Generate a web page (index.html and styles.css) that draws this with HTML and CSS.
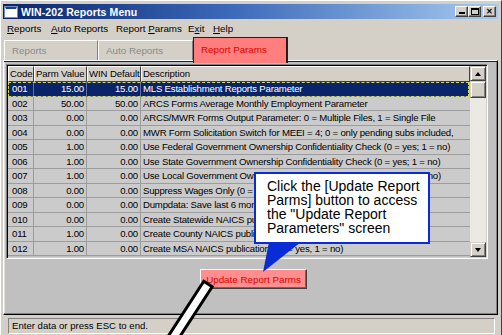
FILE: index.html
```html
<!DOCTYPE html>
<html>
<head>
<meta charset="utf-8">
<link rel="stylesheet" href="styles.css">
</head>
<body>
<div class="window">
  <div class="titlebar">
    <span class="ticon"></span>
    <span class="ttext">WIN-202 Reports Menu</span>
    <div class="tbtns">
      <span class="tb tb-min"><i></i></span>
      <span class="tb tb-max"><i></i></span>
      <span class="tb tb-close">✕</span>
    </div>
  </div>
  <div class="menubar">
    <span class="m m1"><u>R</u>eports</span>
    <span class="m m2"><u>A</u>uto Reports</span>
    <span class="m m3">Report <u>P</u>arams</span>
    <span class="m m4">E<u>x</u>it</span>
    <span class="m m5"><u>H</u>elp</span>
  </div>
  <div class="tabs">
    <div class="tab t1">Reports</div>
    <div class="tab t2">Auto Reports</div>
    <div class="tab active">Report Params</div>
  </div>
  <div class="panel">
    <div class="gridbox">
      <div class="grid">
        <div class="row head"><span>Code</span><span>Parm Value</span><span>WIN Default</span><span class="d">Description</span></div>
        <div class="row sel"><span class="c">001</span><span class="n">15.00</span><span class="n">15.00</span><span class="d">MLS Establishment Reports Parameter</span></div>
        <div class="row"><span class="c">002</span><span class="n">50.00</span><span class="n">50.00</span><span class="d">ARCS Forms Average Monthly Employment Parameter</span></div>
        <div class="row"><span class="c">003</span><span class="n">0.00</span><span class="n">0.00</span><span class="d">ARCS/MWR Forms Output Parameter: 0 = Multiple Files, 1 = Single File</span></div>
        <div class="row"><span class="c">004</span><span class="n">0.00</span><span class="n">0.00</span><span class="d">MWR Form Solicitation Switch for MEEI = 4; 0 = only pending subs included,</span></div>
        <div class="row"><span class="c">005</span><span class="n">1.00</span><span class="n">0.00</span><span class="d">Use Federal Government Ownership Confidentiality Check (0 = yes; 1 = no)</span></div>
        <div class="row"><span class="c">006</span><span class="n">1.00</span><span class="n">0.00</span><span class="d">Use State Government Ownership Confidentiality Check (0 = yes; 1 = no)</span></div>
        <div class="row"><span class="c">007</span><span class="n">1.00</span><span class="n">0.00</span><span class="d">Use Local Government Ownership Confidentiality Check (0 = yes; 1 = no)</span></div>
        <div class="row"><span class="c">008</span><span class="n">0.00</span><span class="n">0.00</span><span class="d">Suppress Wages Only (0 = yes; 1 = no)</span></div>
        <div class="row"><span class="c">009</span><span class="n">0.00</span><span class="n">0.00</span><span class="d">Dumpdata: Save last 6 months of data (0 = no; 1 = yes; max = 4)</span></div>
        <div class="row"><span class="c">010</span><span class="n">0.00</span><span class="n">0.00</span><span class="d">Create Statewide NAICS publications (0 = yes, 1 = no)</span></div>
        <div class="row"><span class="c">011</span><span class="n">1.00</span><span class="n">0.00</span><span class="d">Create County NAICS publications (0 = yes, 1 = no)</span></div>
        <div class="row"><span class="c">012</span><span class="n">1.00</span><span class="n">0.00</span><span class="d">Create MSA NAICS publications (0 = yes, 1 = no)</span></div>
      </div>
      <div class="vscroll">
        <div class="sbtn up"><i></i></div>
        <div class="thumb"></div>
        <div class="track"></div>
        <div class="sbtn down"><i></i></div>
      </div>
    </div>
    <div class="btnrow"><button class="upd">Update Report Parms</button></div>
  </div>
  <div class="status"><div class="statusbox">Enter data or press ESC to end.</div></div>

  <div class="callout">Click the [Update Report Parms] button to access the "Update Report Parameters" screen</div>
  <svg class="overlay" width="502" height="335" viewBox="0 0 502 335">
    <polygon points="268,241 300,241 262,271" fill="#0a2cd6"/>
    <polygon points="202.8,280.3 211.2,285.7 176.2,339.7 167.8,334.3" fill="#ffffff" stroke="#000" stroke-width="3" stroke-linejoin="miter"/>
  </svg>
</div>
</body>
</html>
```
FILE: styles.css
```css
* { box-sizing: border-box; }
html, body { margin: 0; padding: 0; }
body {
  width: 502px; height: 335px; overflow: hidden;
  font-family: "Liberation Sans", Arial, sans-serif;
  font-size: 9.5px;
  background: #d4d0c8;
  color: #000;
}
.window {
  position: relative;
  height: 335px;
  padding: 3px 3px 0 3px;
  background: #d4d0c8;
  border-left: 1px solid #ffffff;
  border-top: 1px solid #ffffff;
  border-right: 1px solid #404040;
}
.titlebar {
  height: 15px;
  margin-left: -1px;
  display: flex;
  align-items: center;
  background: linear-gradient(to right, #0a246a 0%, #3a68b8 45%, #a6caf0 100%);
  padding-left: 2px;
}
.ticon {
  width: 12px; height: 10px;
  background: #fff;
  border: 1px solid #fff;
  border-top: 2px solid #1c3c8c;
  box-shadow: 0 0 0 1px #6d8fc8;
}
.ttext {
  color: #fff; font-weight: bold; font-size: 10.5px;
  margin-left: 4px; letter-spacing: 0.1px;
}
.tbtns { margin-left: auto; display: flex; padding-right: 2px; }
.tb {
  width: 13px; height: 11px;
  background: #d4d0c8;
  border: 1px solid; border-color: #fff #404040 #404040 #fff;
  box-shadow: inset -1px -1px #808080;
  position: relative;
  display: flex; align-items: center; justify-content: center;
  font-size: 9px; font-weight: bold; line-height: 1;
}
.tb-max { margin-right: 2px; }
.tb-min i { position: absolute; left: 3px; bottom: 2px; width: 6px; height: 2px; background: #000; }
.tb-max i { width: 8px; height: 7px; border: 1px solid #000; border-top-width: 2px; }
.tb-close { font-size: 8px; }

.menubar {
  height: 18px;
  display: flex; align-items: center;
  padding-left: 3px;
  font-size: 9.8px;
}
.m { display: block; }
.m1 { width: 44px; }
.m2 { width: 65px; }
.m3 { width: 72px; }
.m4 { width: 25px; }

.tabs {
  height: 23px;
  display: flex; align-items: flex-end;
  padding-left: 0;
  position: relative; z-index: 2;
}
.tab {
  height: 20px;
  display: flex; align-items: center;
  padding-left: 7px;
  background: #d4d0c8;
  color: #8a8a8a;
  border-top: 1px solid #fff;
  border-left: 1px solid #fff;
  border-right: 1px solid #808080;
  font-size: 9.8px;
}
.t1 { width: 94px; }
.t2 { width: 95px; }
.tab.active {
  width: 95px; height: 26px;
  margin-bottom: -3px;
  background: #ff7f7f;
  color: #e00000;
  border-top: 1px solid #202020;
  border-left: 1px solid #202020;
  border-right: 2px solid #202020;
  align-items: flex-start;
  padding-top: 6px;
}

.panel {
  height: 255px;
  margin-left: -1px;
  background: #c0c0c0;
  border-top: 1px solid #fff;
  border-left: 1px solid #fff;
  border-right: 1px solid #000;
  border-bottom: 1px solid #000;
  box-shadow: inset 0 1px 0 #202020, inset -1px -1px 0 #808080, inset 1px 0 0 #e0e0e0;
  padding: 3px 0 0 2px;
}
.gridbox {
  width: 482px; height: 195px;
  display: flex;
  border: 1px solid; border-color: #808080 #fff #fff #808080;
  box-shadow: inset 1px 1px 0 #000, inset -1px -1px 0 #d4d0c8;
  padding: 1px;
}
.grid { width: 462px; height: 191px; overflow: hidden; }
.row {
  display: grid;
  grid-template-columns: 26px 53px 54px 1fr;
  height: 14.5px;
  line-height: 13px;
  background: #cbcbcb;
  font-size: 9.6px;
  letter-spacing: -0.2px;
}
.row span {
  white-space: nowrap; overflow: hidden;
  border-right: 1px solid #9c9c9c;
  border-bottom: 1px solid #9c9c9c;
  padding: 0 2px;
}
.row .c { padding-left: 4px; }
.row .n { text-align: right; padding-right: 2px; }
.row .d { border-right: none; padding-left: 2px; }
.row.head {
  height: 16px; line-height: 14px;
  background: #d4d0c8;
  letter-spacing: -0.1px;
}
.row.head span {
  border-top: 1px solid #fff; border-left: 1px solid #fff;
  border-right: 1px solid #404040; border-bottom: 1px solid #404040;
  padding: 0 1px;
}
.row.sel {
  background: #0a246a; color: #fff;
  outline: 1px dashed #d8d860; outline-offset: -1px;
  margin-right: 1px;
}
.row.sel span { border-color: #6070a0; }

.vscroll { width: 16px; height: 191px; display: flex; flex-direction: column; }
.sbtn {
  height: 15px; flex: none;
  background: #d4d0c8;
  border: 1px solid; border-color: #d4d0c8 #404040 #404040 #d4d0c8;
  box-shadow: inset 1px 1px #fff, inset -1px -1px #808080;
  display: flex; align-items: center; justify-content: center;
}
.sbtn i { width: 0; height: 0; border-left: 3.5px solid transparent; border-right: 3.5px solid transparent; }
.sbtn.up i { border-bottom: 4px solid #000; }
.sbtn.down i { border-top: 4px solid #000; }
.thumb {
  height: 17px; flex: none;
  background: #d4d0c8;
  border: 1px solid; border-color: #d4d0c8 #404040 #404040 #d4d0c8;
  box-shadow: inset 1px 1px #fff, inset -1px -1px #808080;
}
.track { flex: 1; background: #ebe9e4; }

.btnrow { padding: 10px 0 0 194px; }
.upd {
  width: 107px; height: 20px;
  background: #ff8f8f;
  color: #dd0000;
  font-family: "Liberation Sans", Arial, sans-serif;
  font-size: 9.8px;
  border: 1px solid; border-color: #fff #404040 #404040 #fff;
  box-shadow: inset -1px -1px #a05050;
  padding: 0;
}

.status { padding: 3px 0 0 4px; }
.statusbox {
  width: 487px; height: 16px;
  border: 1px solid; border-color: #808080 #fff #fff #808080;
  padding-left: 3px;
  line-height: 14px;
  font-size: 9.6px;
}

.callout {
  position: absolute;
  left: 253px; top: 171px;
  width: 176px; height: 72px;
  background: #fff;
  border: 2px solid #0a2cd6;
  padding: 5px 0 0 11px;
  font-size: 14px;
  line-height: 14px;
  color: #000;
  z-index: 5;
}
.overlay { position: absolute; left: 0; top: 0; z-index: 6; pointer-events: none; }
```
